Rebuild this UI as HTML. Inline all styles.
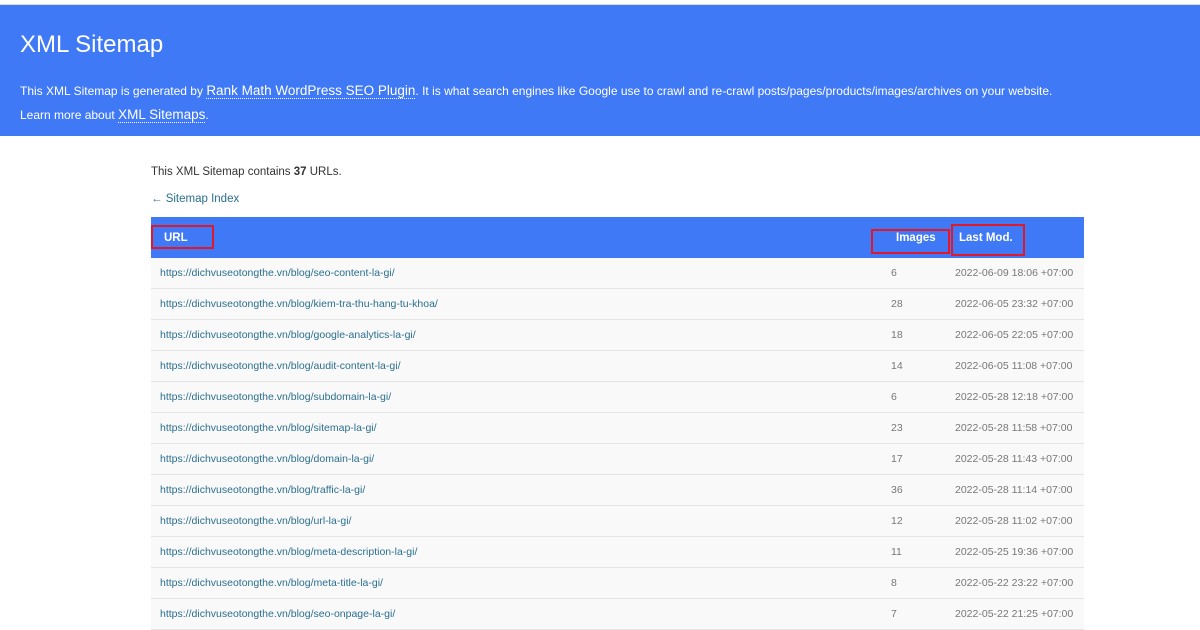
<!DOCTYPE html>
<html><head><meta charset="utf-8"><style>
body{margin:0;width:1200px;height:630px;overflow:hidden;background:#fff;font-family:"Liberation Sans",sans-serif;}
.top{height:4px;background:#fff;border-bottom:1px solid #ddd;}
.hd{position:absolute;top:5px;left:0;width:1200px;height:131px;background:#4079f5;color:#fff;}
.hd h1{position:absolute;left:20px;top:26px;margin:0;font-weight:normal;font-size:24px;}
.hd p{position:absolute;left:20px;top:74px;margin:0;font-size:12px;line-height:23px;width:1170px;}
.hd a{color:#fff;text-decoration:none;border-bottom:1px dotted #fff;font-size:13.5px;}
.c{position:absolute;left:151px;top:0;width:933px;font-size:11.5px;color:#333;}
.c .t1{position:absolute;top:166px;left:0;white-space:nowrap;}
.c .t2{position:absolute;top:193px;left:0;color:#2a6f8f;white-space:nowrap;}
table{position:absolute;top:217px;left:0;width:933px;border-collapse:collapse;table-layout:fixed;}
th{background:#4079f5;color:#fff;height:41px;font-size:11.5px;text-align:left;padding:0;}
td{height:30px;border-bottom:1px solid #e4e4e4;background:#f9f9f9;font-size:10.5px;color:#777;padding:0;}
td.u{color:#2a6f8f;padding-left:9px;}
td.i{padding-left:20px;}
td.d{padding-left:4px;}
.box{position:absolute;border:2px solid #e0182a;}
</style></head><body>
<div class="top"></div>
<div class="hd"><h1>XML Sitemap</h1>
<p>This XML Sitemap is generated by <a>Rank Math WordPress SEO Plugin</a>. It is what search engines like Google use to crawl and re-crawl posts/pages/products/images/archives on your website.<br>Learn more about <a>XML Sitemaps</a>.</p></div>
<div class="c">
<div class="t1">This XML Sitemap contains <b>37</b> URLs.</div>
<div class="t2">← Sitemap Index</div>
<table>
<colgroup><col style="width:720px"><col style="width:80px"><col style="width:133px"></colgroup>
<tr><th style="padding-left:13px">URL</th><th style="padding-left:25px">Images</th><th style="padding-left:8px">Last Mod.</th></tr>
<tr><td class="u">https://dichvuseotongthe.vn/blog/seo-content-la-gi/</td><td class="i">6</td><td class="d">2022-06-09 18:06 +07:00</td></tr>
<tr><td class="u">https://dichvuseotongthe.vn/blog/kiem-tra-thu-hang-tu-khoa/</td><td class="i">28</td><td class="d">2022-06-05 23:32 +07:00</td></tr>
<tr><td class="u">https://dichvuseotongthe.vn/blog/google-analytics-la-gi/</td><td class="i">18</td><td class="d">2022-06-05 22:05 +07:00</td></tr>
<tr><td class="u">https://dichvuseotongthe.vn/blog/audit-content-la-gi/</td><td class="i">14</td><td class="d">2022-06-05 11:08 +07:00</td></tr>
<tr><td class="u">https://dichvuseotongthe.vn/blog/subdomain-la-gi/</td><td class="i">6</td><td class="d">2022-05-28 12:18 +07:00</td></tr>
<tr><td class="u">https://dichvuseotongthe.vn/blog/sitemap-la-gi/</td><td class="i">23</td><td class="d">2022-05-28 11:58 +07:00</td></tr>
<tr><td class="u">https://dichvuseotongthe.vn/blog/domain-la-gi/</td><td class="i">17</td><td class="d">2022-05-28 11:43 +07:00</td></tr>
<tr><td class="u">https://dichvuseotongthe.vn/blog/traffic-la-gi/</td><td class="i">36</td><td class="d">2022-05-28 11:14 +07:00</td></tr>
<tr><td class="u">https://dichvuseotongthe.vn/blog/url-la-gi/</td><td class="i">12</td><td class="d">2022-05-28 11:02 +07:00</td></tr>
<tr><td class="u">https://dichvuseotongthe.vn/blog/meta-description-la-gi/</td><td class="i">11</td><td class="d">2022-05-25 19:36 +07:00</td></tr>
<tr><td class="u">https://dichvuseotongthe.vn/blog/meta-title-la-gi/</td><td class="i">8</td><td class="d">2022-05-22 23:22 +07:00</td></tr>
<tr><td class="u">https://dichvuseotongthe.vn/blog/seo-onpage-la-gi/</td><td class="i">7</td><td class="d">2022-05-22 21:25 +07:00</td></tr>
</table>
</div>
<div class="box" style="left:151px;top:225px;width:59px;height:20px"></div>
<div class="box" style="left:871px;top:229px;width:75px;height:21px"></div>
<div class="box" style="left:951px;top:224px;width:70px;height:28px"></div>
</body></html>
